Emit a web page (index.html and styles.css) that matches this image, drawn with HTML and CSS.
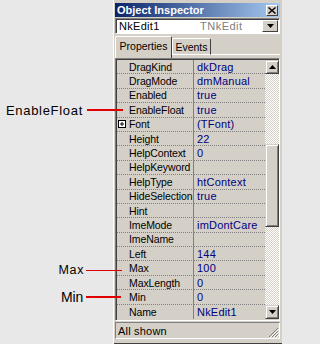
FILE: index.html
```html
<!DOCTYPE html>
<html>
<head>
<meta charset="utf-8">
<link rel="stylesheet" href="styles.css">
</head>
<body>
<div class="gutter"></div>
<div class="window">
  <div class="titlebar">
    <span class="title">Object Inspector</span>
    <span class="close"><svg width="8" height="7" viewBox="0 0 8 7"><path d="M0.5 0.5L7.5 6.5M7.5 0.5L0.5 6.5" stroke="#000" stroke-width="1.4"/></svg></span>
  </div>
  <div class="combo">
    <span class="combo-name">NkEdit1</span>
    <span class="combo-type">TNkEdit</span>
    <span class="combo-btn"><svg width="7" height="4" viewBox="0 0 7 4"><path d="M0 0H7L3.5 4Z" fill="#000"/></svg></span>
  </div>
  <div class="tabs">
    <div class="tab active">Properties</div>
    <div class="tab">Events</div>
    <div class="tab-rest"></div>
  </div>
  <div class="grid">
    <div class="rows">
      <div class="row"><span class="name">DragKind</span><span class="val">dkDrag</span></div>
      <div class="row"><span class="name">DragMode</span><span class="val">dmManual</span></div>
      <div class="row"><span class="name">Enabled</span><span class="val">true</span></div>
      <div class="row"><span class="name">EnableFloat</span><span class="val">true</span></div>
      <div class="row"><span class="name"><span class="plus"><svg width="8" height="8" viewBox="0 0 8 8"><rect x="0.5" y="0.5" width="7" height="7" fill="#fff" stroke="#000"/><path d="M2 4H6M4 2V6" stroke="#000"/></svg></span>Font</span><span class="val">(TFont)</span></div>
      <div class="row"><span class="name">Height</span><span class="val">22</span></div>
      <div class="row"><span class="name">HelpContext</span><span class="val">0</span></div>
      <div class="row"><span class="name">HelpKeyword</span><span class="val"></span></div>
      <div class="row"><span class="name">HelpType</span><span class="val">htContext</span></div>
      <div class="row"><span class="name">HideSelection</span><span class="val">true</span></div>
      <div class="row"><span class="name">Hint</span><span class="val"></span></div>
      <div class="row"><span class="name">ImeMode</span><span class="val">imDontCare</span></div>
      <div class="row"><span class="name">ImeName</span><span class="val"></span></div>
      <div class="row"><span class="name">Left</span><span class="val">144</span></div>
      <div class="row"><span class="name">Max</span><span class="val">100</span></div>
      <div class="row"><span class="name">MaxLength</span><span class="val">0</span></div>
      <div class="row"><span class="name">Min</span><span class="val">0</span></div>
      <div class="row last"><span class="name">Name</span><span class="val">NkEdit1</span></div>
    </div>
    <div class="scrollbar">
      <div class="sbtn"><svg width="7" height="4" viewBox="0 0 7 4"><path d="M3.5 0L7 4H0Z" fill="#000"/></svg></div>
      <div class="track t1"></div>
      <div class="thumb"></div>
      <div class="track t2"></div>
      <div class="sbtn"><svg width="7" height="4" viewBox="0 0 7 4"><path d="M0 0H7L3.5 4Z" fill="#000"/></svg></div>
    </div>
  </div>
  <div class="status">
    <span class="status-text">All shown</span>
    <svg class="grip" width="11" height="11" viewBox="0 0 11 11"><path d="M10 1L1 10M10 4L4 10M10 7L7 10" stroke="#808080" stroke-width="1"/><path d="M11 2L2 11M11 5L5 11M11 8L8 11" stroke="#fff" stroke-width="1"/></svg>
  </div>
</div>

<div class="note n-enable"><span class="label l-enable">EnableFloat</span><span class="line thick w36"></span></div>
<div class="note n-max"><span class="label l-max">Max</span><span class="line thin w36"></span></div>
<div class="note n-min"><span class="label l-min">Min</span><span class="line thick w35"></span></div>
</body>
</html>
```

FILE: styles.css
```css
html, body {
  margin: 0;
  padding: 0;
}
body {
  width: 282px;
  height: 344px;
  overflow: hidden;
  position: relative;
  display: flex;
  background: #e8e8e8;
  font-family: "Liberation Sans", Arial, sans-serif;
  font-size: 11px;
  color: #000;
}
.gutter {
  width: 113px;
  flex: none;
}
.window {
  width: 169px;
  height: 344px;
  box-sizing: border-box;
  flex: none;
  background: #d4d0c8;
  padding: 3px 2px 2px 2px;
  display: flex;
  flex-direction: column;
  box-shadow: inset 1px 0 #fff, inset 0 -1px #404040;
}
.titlebar {
  height: 14px;
  flex: none;
  background: linear-gradient(to right, #0a246a, #a6caf0);
  display: flex;
  align-items: center;
  padding-left: 2px;
}
.title {
  color: #fff;
  font-weight: bold;
  font-size: 11px;
  letter-spacing: 0;
  flex: 1;
}
.close {
  width: 12px;
  height: 11px;
  margin-right: 2px;
  background: #d4d0c8;
  box-sizing: border-box;
  border: 1px solid;
  border-color: #fff #404040 #404040 #fff;
  display: flex;
  align-items: center;
  justify-content: center;
}
.combo {
  margin-top: 1px;
  height: 16px;
  flex: none;
  box-sizing: border-box;
  background: #fff;
  border: 1px solid;
  border-color: #808080 #fff #fff #808080;
  box-shadow: inset 1px 1px #404040;
  display: flex;
  align-items: center;
  padding-left: 3px;
}
.combo-name {
  width: 81px;
  letter-spacing: 0.3px;
}
.combo-type {
  flex: 1;
  color: #808080;
  letter-spacing: 0.5px;
}
.combo-btn {
  width: 16px;
  height: 12px;
  margin-right: 1px;
  box-sizing: border-box;
  background: #d4d0c8;
  border: 1px solid;
  border-color: #fff #404040 #404040 #fff;
  display: flex;
  align-items: center;
  justify-content: center;
}
.tabs {
  height: 24px;
  flex: none;
  display: flex;
  align-items: flex-start;
  padding-top: 2px;
  box-sizing: border-box;
}
.tab {
  box-sizing: border-box;
  border: 1px solid;
  border-color: #fff #404040 transparent #fff;
  border-bottom: none;
  border-radius: 2px 2px 0 0;
  display: flex;
  align-items: center;
  justify-content: center;
  font-size: 10.5px;
}
.tab.active {
  width: 57px;
  height: 22px;
  padding-bottom: 3px;
}
.tab:not(.active) {
  margin-top: 2px;
  width: 39px;
  height: 17px;
  border-bottom: 1px solid #fff;
  border-radius: 2px 2px 0 0;
  padding-top: 1px;
}
.tab-rest {
  flex: 1;
  height: 19px;
  margin-top: 0;
  border-bottom: 1px solid #fff;
  box-sizing: border-box;
}
.grid {
  height: 263px;
  flex: none;
  box-sizing: border-box;
  border: 1px solid;
  border-color: #808080 #fff #fff #808080;
  box-shadow: inset 1px 1px #404040;
  padding: 1px 0 0 1px;
  display: flex;
}
.rows {
  flex: 1;
  display: flex;
  flex-direction: column;
}
.row {
  height: 14.4px;
  display: flex;
  flex: none;
}
.name, .val {
  box-sizing: border-box;
  border-bottom: 1px dotted #808080;
  display: flex;
  align-items: center;
  white-space: nowrap;
  overflow: hidden;
}
.row.last .name, .row.last .val {
  border-bottom: none;
}
.name {
  width: 77px;
  padding-left: 12px;
  border-right: 1px solid #808080;
  font-size: 10.5px;
  letter-spacing: -0.1px;
}
.val {
  flex: 1;
  padding-left: 3px;
  color: #000080;
  letter-spacing: 0.2px;
}
.plus {
  margin-left: -11px;
  width: 11px;
  display: flex;
  align-items: center;
}
.scrollbar {
  width: 14px;
  flex: none;
  display: flex;
  flex-direction: column;
}
.sbtn {
  height: 14px;
  flex: none;
  box-sizing: border-box;
  background: #d4d0c8;
  border: 1px solid;
  border-color: #d4d0c8 #404040 #404040 #d4d0c8;
  box-shadow: inset 1px 1px #fff, inset -1px -1px #808080;
  display: flex;
  align-items: center;
  justify-content: center;
}
.track {
  flex: none;
  background-color: #fff;
  background-image: repeating-conic-gradient(#d4d0c8 0 25%, #fff 0 50%);
  background-size: 2px 2px;
}
.t1 { height: 70px; }
.t2 { height: 78px; }
.thumb {
  height: 83px;
  flex: none;
  box-sizing: border-box;
  background: #d4d0c8;
  border: 1px solid;
  border-color: #d4d0c8 #404040 #404040 #d4d0c8;
  box-shadow: inset 1px 1px #fff, inset -1px -1px #808080;
}
.status {
  margin-top: 1px;
  height: 17px;
  flex: none;
  box-sizing: border-box;
  border: 1px solid;
  border-color: #808080 #fff #fff #808080;
  display: flex;
  align-items: center;
  padding-left: 2px;
  position: relative;
}
.status-text {
  flex: 1;
  letter-spacing: 0.2px;
}
.grip {
  align-self: flex-end;
  margin-right: 0;
}
.note {
  position: absolute;
  height: 16px;
  display: flex;
  align-items: center;
}
.n-enable { right: 159px; top: 102px; }
.n-max { right: 160px; top: 262px; }
.n-min { right: 161px; top: 289px; }
.label {
  color: #000;
  white-space: nowrap;
}
.l-enable {
  font-size: 13px;
  letter-spacing: 0.7px;
  margin-right: 4px;
}
.l-max {
  font-size: 12.5px;
  letter-spacing: 0.6px;
  margin-right: 2px;
}
.l-min {
  font-size: 14px;
  letter-spacing: -0.2px;
  margin-right: 3px;
}
.line {
  background: #e00000;
  display: block;
}
.thick { height: 2px; }
.thin { height: 1px; }
.w36 { width: 36px; }
.w35 { width: 35px; }
```
